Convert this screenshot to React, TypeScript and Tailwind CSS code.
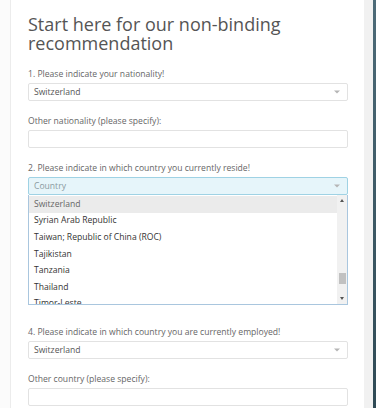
const countries = [
  "Switzerland",
  "Syrian Arab Republic",
  "Taiwan; Republic of China (ROC)",
  "Tajikistan",
  "Tanzania",
  "Thailand",
  "Timor-Leste",
]

function Caret() {
  return (
    <svg width="6" height="4" viewBox="0 0 6 4" className="shrink-0">
      <path d="M0 0.5 L6 0.5 L3 3.5 Z" fill="#b5b5b5" />
    </svg>
  )
}

function Select({ value, active }: { value: string; active?: boolean }) {
  return (
    <div
      className={
        active
          ? "flex h-[18px] items-center justify-between rounded-[2px] border border-[#9fd2e4] bg-[#e6f5fa] pl-[5px] pr-[7px]"
          : "flex h-[18px] items-center justify-between rounded-[2px] border border-[#e2e2e2] bg-white pl-[5px] pr-[7px]"
      }
    >
      <span className={active ? "text-[#8a9aa0]" : "text-[#555]"}>{value}</span>
      <Caret />
    </div>
  )
}

function Field({ label, children }: { label: string; children: React.ReactNode }) {
  return (
    <div className="flex flex-col gap-[3px]">
      <label className="leading-[12px] text-[#666]">{label}</label>
      {children}
    </div>
  )
}

export default function App() {
  return (
    <div
      className="flex h-[408px] w-[376px] overflow-hidden bg-[#f7f7f7] text-[8.6px]"
      style={{ fontFamily: '"Open Sans", "Liberation Sans", sans-serif' }}
    >
      <div className="w-[11px] shrink-0 border-r border-[#ececec] bg-[#fbfbfb]" />
      <div className="w-[353px] shrink-0 bg-white pl-[17px] pr-[16px] pt-[15px]">
        <h1 className="text-[18px] leading-[19px] font-normal text-[#555]">
          Start here for our non-binding
          <br />
          recommendation
        </h1>

        <div className="mt-[15px] flex flex-col gap-[14px]">
          <Field label="1. Please indicate your nationality!">
            <Select value="Switzerland" />
          </Field>

          <Field label="Other nationality (please specify):">
            <div className="h-[18px] rounded-[2px] border border-[#e2e2e2] bg-white" />
          </Field>

          <Field label="2. Please indicate in which country you currently reside!">
            <div className="flex flex-col">
              <Select value="Country" active />
              <div className="flex h-[110px] border border-t-0 border-[#a9c6de] bg-white">
                <div className="flex-1 overflow-hidden pt-[1px]">
                  {countries.map((c, i) => (
                    <div
                      key={c}
                      className={
                        i === 0
                          ? "flex h-[16.6px] items-center bg-[#ebebeb] pl-[5px] text-[#666]"
                          : "flex h-[16.6px] items-center pl-[5px] text-[#333]"
                      }
                    >
                      {c}
                    </div>
                  ))}
                </div>
                <div className="flex w-[10px] flex-col items-center justify-between bg-[#f1f1f1] py-[4px]">
                  <svg width="4" height="3" viewBox="0 0 4 3">
                    <path d="M0 3 L4 3 L2 0 Z" fill="#555" />
                  </svg>
                  <div className="flex flex-1 flex-col justify-end pb-[13px]">
                    <div className="h-[11px] w-[7px] bg-[#c1c1c1]" />
                  </div>
                  <svg width="4" height="3" viewBox="0 0 4 3">
                    <path d="M0 0 L4 0 L2 3 Z" fill="#555" />
                  </svg>
                </div>
              </div>
            </div>
          </Field>

          <div className="mt-[7px]">
            <Field label="4. Please indicate in which country you are currently employed!">
              <Select value="Switzerland" />
            </Field>
          </div>

          <Field label="Other country (please specify):">
            <div className="h-[18px] rounded-[2px] border border-[#e2e2e2] bg-white" />
          </Field>
        </div>
      </div>
      <div className="w-[9px] shrink-0 bg-[#f1f1f1]" />
      <div className="w-[3px] shrink-0 bg-gradient-to-b from-[#4d6b78] to-[#2f4a55]" />
    </div>
  )
}
